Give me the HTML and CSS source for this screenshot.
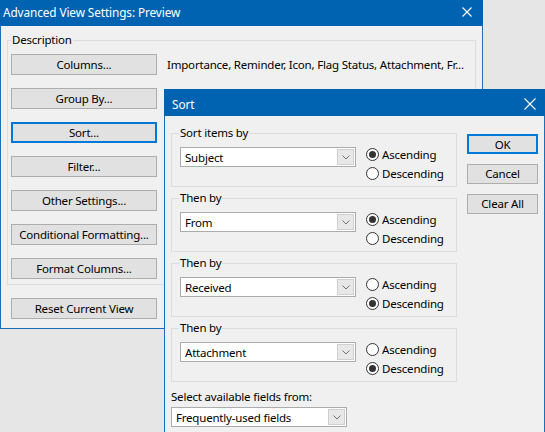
FILE: index.html
```html
<!DOCTYPE html>
<html>
<head>
<meta charset="utf-8">
<link rel="stylesheet" href="styles.css">
</head>
<body>
<div class="desktop">
  <div class="window main">
    <div class="titlebar">
      <span class="title">Advanced View Settings: Preview</span>
      <svg class="close" width="10" height="10" viewBox="0 0 10 10"><path d="M0.5 0.5L9.5 9.5M9.5 0.5L0.5 9.5" stroke="#fff" stroke-width="1.1" fill="none"/></svg>
    </div>
    <div class="main-body">
      <fieldset class="desc">
        <legend>Description</legend>
        <div class="desc-row"><button class="btn wide">Columns...</button><span class="desc-text">Importance, Reminder, Icon, Flag Status, Attachment, Fr...</span></div>
        <div class="desc-row"><button class="btn wide">Group By...</button></div>
        <div class="desc-row"><button class="btn wide focus">Sort...</button></div>
        <div class="desc-row"><button class="btn wide">Filter...</button></div>
        <div class="desc-row"><button class="btn wide">Other Settings...</button></div>
        <div class="desc-row"><button class="btn wide">Conditional Formatting...</button></div>
        <div class="desc-row"><button class="btn wide">Format Columns...</button></div>
      </fieldset>
      <button class="btn wide reset">Reset Current View</button>
    </div>
  </div>

  <div class="window sort">
    <div class="titlebar sort-title">
      <span class="title">Sort</span>
      <svg class="close" width="12" height="12" viewBox="0 0 12 12"><path d="M0.5 0.5L11.5 11.5M11.5 0.5L0.5 11.5" stroke="#fff" stroke-width="1.1" fill="none"/></svg>
    </div>
    <div class="sort-body">
      <div class="sort-left">
        <fieldset class="grp">
          <legend>Sort items by</legend>
          <div class="grp-row">
            <div class="select"><span>Subject</span><span class="dd"><svg width="8" height="5" viewBox="0 0 8 5"><path d="M0.5 0.5L4 4L7.5 0.5" stroke="#707070" fill="none"/></svg></span></div>
            <div class="radios">
              <label class="radio"><span class="dot on"></span>Ascending</label>
              <label class="radio"><span class="dot"></span>Descending</label>
            </div>
          </div>
        </fieldset>
        <fieldset class="grp">
          <legend>Then by</legend>
          <div class="grp-row">
            <div class="select"><span>From</span><span class="dd"><svg width="8" height="5" viewBox="0 0 8 5"><path d="M0.5 0.5L4 4L7.5 0.5" stroke="#707070" fill="none"/></svg></span></div>
            <div class="radios">
              <label class="radio"><span class="dot on"></span>Ascending</label>
              <label class="radio"><span class="dot"></span>Descending</label>
            </div>
          </div>
        </fieldset>
        <fieldset class="grp">
          <legend>Then by</legend>
          <div class="grp-row">
            <div class="select"><span>Received</span><span class="dd"><svg width="8" height="5" viewBox="0 0 8 5"><path d="M0.5 0.5L4 4L7.5 0.5" stroke="#707070" fill="none"/></svg></span></div>
            <div class="radios">
              <label class="radio"><span class="dot"></span>Ascending</label>
              <label class="radio"><span class="dot on"></span>Descending</label>
            </div>
          </div>
        </fieldset>
        <fieldset class="grp">
          <legend>Then by</legend>
          <div class="grp-row">
            <div class="select"><span>Attachment</span><span class="dd"><svg width="8" height="5" viewBox="0 0 8 5"><path d="M0.5 0.5L4 4L7.5 0.5" stroke="#707070" fill="none"/></svg></span></div>
            <div class="radios">
              <label class="radio"><span class="dot"></span>Ascending</label>
              <label class="radio"><span class="dot on"></span>Descending</label>
            </div>
          </div>
        </fieldset>
        <div class="fields-label">Select available fields from:</div>
        <div class="select fields"><span>Frequently-used fields</span><span class="dd"><svg width="8" height="5" viewBox="0 0 8 5"><path d="M0.5 0.5L4 4L7.5 0.5" stroke="#707070" fill="none"/></svg></span></div>
      </div>
      <div class="sort-right">
        <button class="btn small focus">OK</button>
        <button class="btn small">Cancel</button>
        <button class="btn small">Clear All</button>
      </div>
    </div>
  </div>
</div>
</body>
</html>
```

FILE: styles.css
```css
* { box-sizing: border-box; }
html, body { margin: 0; padding: 0; }
body {
  font-family: "Noto Sans", "Open Sans", sans-serif;
  font-size: 11.5px;
  letter-spacing: -0.2px;
  color: #000;
}
.desktop {
  position: relative;
  width: 545px;
  height: 432px;
  overflow: hidden;
  background: #e6e6e6;
}
.window {
  background: #f0f0f0;
  border: 1px solid #1a6fb8;
  border-top: none;
}
.main {
  width: 483px;
  height: 329px;
  display: flex;
  flex-direction: column;
}
.titlebar {
  height: 26px;
  background: #0063b1;
  color: #fff;
  display: flex;
  align-items: center;
  justify-content: space-between;
  margin: 0 -1px;
  padding: 0 11px 2px 3px;
  font-size: 11.8px;
  letter-spacing: -0.1px;
}
.main-body {
  padding: 6px 6px 0 6px;
  display: flex;
  flex-direction: column;
}
fieldset {
  margin: 0;
  border: 1px solid #dcdcdc;
  min-width: 0;
}
legend {
  padding: 0 1px;
  line-height: 16px;
  height: 16px;
}
.desc {
  width: 469px;
  padding: 6px 0 5px 3px;
  display: flex;
  flex-direction: column;
  gap: 13px;
}
.desc legend { margin-left: 0; padding: 0 1px 0 1px; }
.desc-row {
  display: flex;
  align-items: center;
  gap: 10px;
  height: 21px;
}
.btn {
  font: inherit;
  letter-spacing: inherit;
  color: #000;
  background: #e1e1e1;
  border: 1px solid #adadad;
  padding: 0;
  margin: 0;
  line-height: 18px;
  text-align: center;
  flex-shrink: 0;
}
.btn.wide { width: 146px; height: 21px; }
.btn.focus { border: 2px solid #0078d7; }
.reset { margin: 13px 0 0 4px; }
.desc-text { white-space: nowrap; }

.sort {
  position: absolute;
  left: 164px;
  top: 89px;
  width: 381px;
  height: 344px;
}
.sort-title {
  height: 27px;
  padding: 2px 9px 0 8px;
}
.sort-body {
  display: flex;
  padding: 0 6px;
  gap: 10px;
}
.sort-left {
  width: 286px;
  padding-top: 9px;
  display: flex;
  flex-direction: column;
}
.grp {
  padding: 4px 0 3px 8px;
  margin-bottom: 3px;
}
.grp legend { padding: 0 1px; margin-left: -1px; }
.grp-row {
  display: flex;
  align-items: flex-start;
  gap: 10px;
}
.select {
  width: 176px;
  height: 20px;
  margin-top: 2px;
  background: #fff;
  border: 1px solid #acacac;
  display: flex;
  align-items: center;
  justify-content: space-between;
  padding: 0 1px 0 4px;
  flex-shrink: 0;
}
.dd {
  width: 17px;
  height: 16px;
  background: #e8e8e8;
  border: 1px solid #cfcfcf;
  display: flex;
  align-items: center;
  justify-content: center;
  padding-top: 1px;
}
.radios { display: flex; flex-direction: column; }
.radio {
  display: flex;
  align-items: center;
  height: 19px;
  gap: 3px;
  white-space: nowrap;
}
.dot {
  width: 13px;
  height: 13px;
  border-radius: 50%;
  border: 1px solid #333;
  background: #fff;
  display: flex;
  align-items: center;
  justify-content: center;
}
.dot.on::after {
  content: "";
  width: 7px;
  height: 7px;
  border-radius: 50%;
  background: #333;
}
.fields-label {
  margin-top: 4px;
  line-height: 16px;
}
.select.fields { margin-top: 2px; }
.sort-right {
  padding-top: 18px;
  display: flex;
  flex-direction: column;
  gap: 10px;
}
.btn.small { width: 71px; height: 20px; }
```
